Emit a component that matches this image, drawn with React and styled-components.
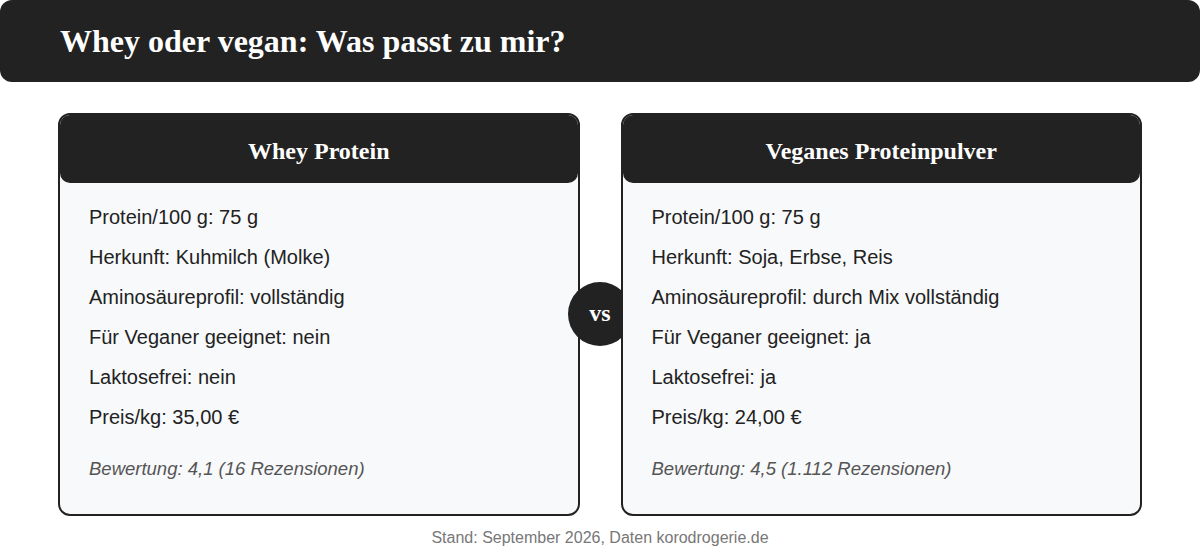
import React from "react";
import styled, { createGlobalStyle } from "styled-components";

const GlobalStyle = createGlobalStyle`
  body {
    margin: 0;
    background: #ffffff;
    font-family: "Liberation Sans", Arial, sans-serif;
  }
`;

const Page = styled.div`
  width: 1200px;
  height: 560px;
  display: flex;
  flex-direction: column;
`;

const TitleBar = styled.header`
  height: 82px;
  background: #222222;
  border-radius: 12px;
  display: flex;
  align-items: center;
  padding-left: 60px;
`;

const Title = styled.h1`
  margin: 0;
  color: #ffffff;
  font-family: "Liberation Serif", "Times New Roman", serif;
  font-weight: bold;
  font-size: 32px;
`;

const Compare = styled.div`
  position: relative;
  display: grid;
  grid-template-columns: 1fr 1fr;
  gap: 41px;
  padding: 31px 58px 0;
`;

const Card = styled.section`
  position: relative;
  border: 2px solid #222222;
  border-radius: 12px;
  background: #f8f9fb;
  overflow: hidden;
`;

const CardHead = styled.div`
  height: 68px;
  background: #222222;
  border-radius: 0 0 10px 10px;
  display: flex;
  align-items: center;
  justify-content: center;
`;

const CardTitle = styled.h2`
  margin: 0;
  color: #ffffff;
  font-family: "Liberation Serif", "Times New Roman", serif;
  font-weight: bold;
  font-size: 24px;
  padding-top: 4px;
`;

const CardBody = styled.ul`
  list-style: none;
  margin: 0;
  padding: 14px 29px 25px;
`;

const Row = styled.li`
  line-height: 40px;
  font-size: 20px;
  color: #222222;
`;

const Rating = styled.li`
  margin-top: 12px;
  line-height: 40px;
  font-size: 18.5px;
  font-style: italic;
  color: #555555;
`;

const Vs = styled.div`
  position: absolute;
  left: 568px;
  top: 200px;
  width: 64px;
  height: 64px;
  border-radius: 50%;
  background: #222222;
  color: #ffffff;
  display: flex;
  align-items: center;
  justify-content: center;
  font-family: "Liberation Serif", "Times New Roman", serif;
  font-weight: bold;
  font-size: 24px;
  padding-bottom: 2px;
  box-sizing: border-box;
`;

const Footer = styled.p`
  margin: 13px 0 0;
  text-align: center;
  font-size: 16px;
  color: #777777;
`;

const products = [
  {
    name: "Whey Protein",
    rows: [
      "Protein/100 g: 75 g",
      "Herkunft: Kuhmilch (Molke)",
      "Aminosäureprofil: vollständig",
      "Für Veganer geeignet: nein",
      "Laktosefrei: nein",
      "Preis/kg: 35,00 €",
    ],
    rating: "Bewertung: 4,1 (16 Rezensionen)",
  },
  {
    name: "Veganes Proteinpulver",
    rows: [
      "Protein/100 g: 75 g",
      "Herkunft: Soja, Erbse, Reis",
      "Aminosäureprofil: durch Mix vollständig",
      "Für Veganer geeignet: ja",
      "Laktosefrei: ja",
      "Preis/kg: 24,00 €",
    ],
    rating: "Bewertung: 4,5 (1.112 Rezensionen)",
  },
];

function ProductCard({ product }) {
  return (
    <Card>
      <CardHead>
        <CardTitle>{product.name}</CardTitle>
      </CardHead>
      <CardBody>
        {product.rows.map((r) => (
          <Row key={r}>{r}</Row>
        ))}
        <Rating>{product.rating}</Rating>
      </CardBody>
    </Card>
  );
}

export default function App() {
  return (
    <>
      <GlobalStyle />
      <Page>
        <TitleBar>
          <Title>Whey oder vegan: Was passt zu mir?</Title>
        </TitleBar>
        <Compare>
          <ProductCard product={products[0]} />
          <Vs>vs</Vs>
          <ProductCard product={products[1]} />
        </Compare>
        <Footer>Stand: September 2026, Daten korodrogerie.de</Footer>
      </Page>
    </>
  );
}
